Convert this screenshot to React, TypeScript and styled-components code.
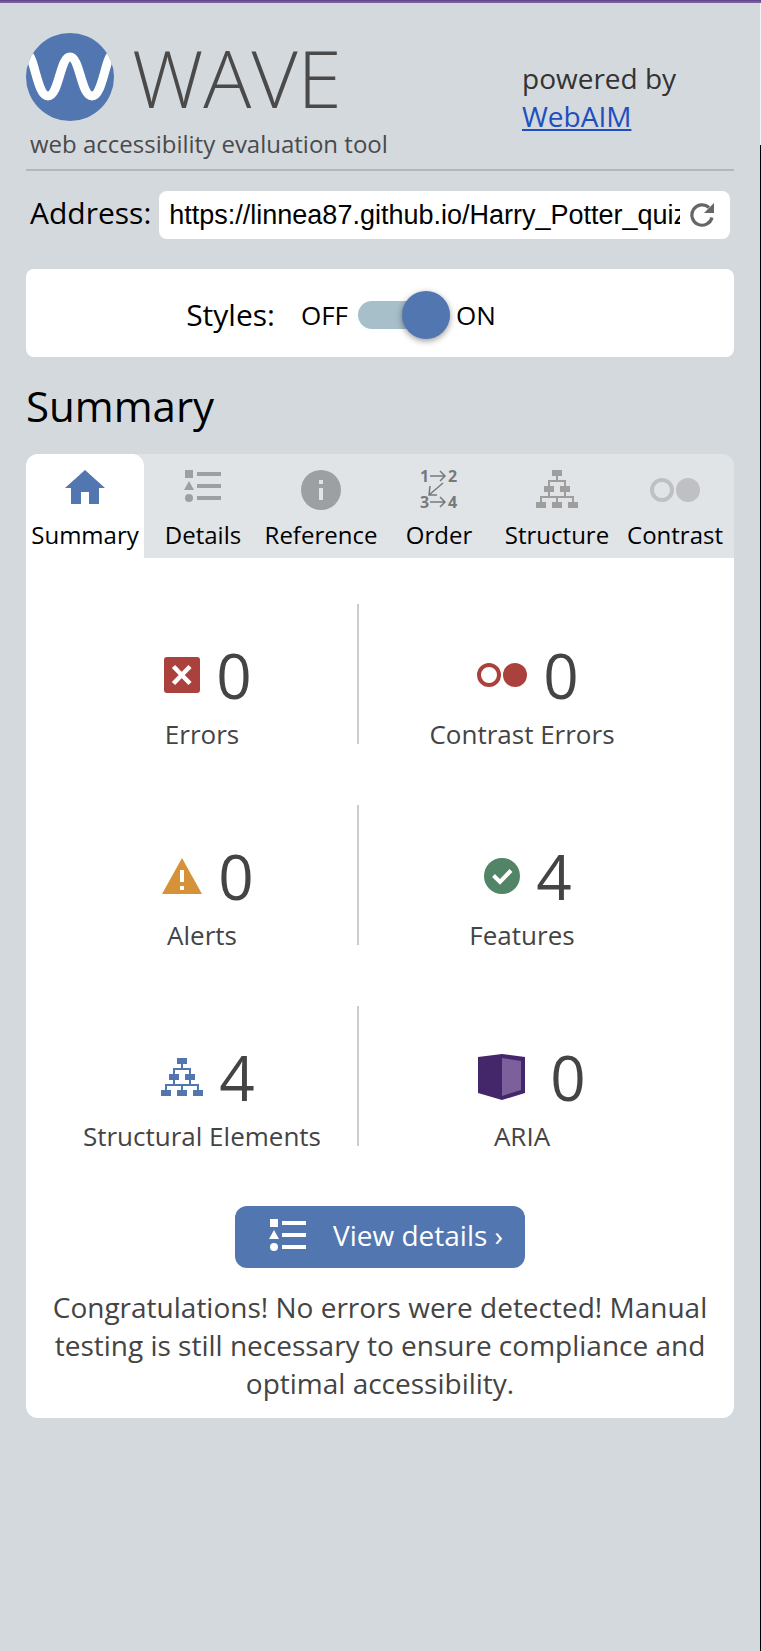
import React, { useState } from "react";
import styled, { createGlobalStyle } from "styled-components";

const colors = {
  page: "#d4d9dd",
  blue: "#5276b0",
  text: "#444444",
  red: "#ab413d",
  icon: "#9ca0a3",
};

const GlobalStyle = createGlobalStyle`
  *, *::before, *::after { box-sizing: border-box; }
  body {
    margin: 0;
    background: ${colors.page};
    color: #000;
    font-family: "Open Sans", "Noto Sans", sans-serif;
    font-size: 28px;
    line-height: 38px;
  }
  button, input { font: inherit; color: inherit; }
`;

const Page = styled.div`
  display: flex;
  flex-direction: column;
  min-height: 100vh;
`;

const TopLine = styled.div`
  height: 3px;
  border-top: 1px solid #5f4885;
  background: #7a5ca0;
`;

const Shell = styled.div`
  display: flex;
  flex: 1;
`;

const Sidebar = styled.div`
  flex: 1;
  min-width: 0;
  padding: 30px 26px 0;
`;

const WindowEdge = styled.div`
  width: 1px;
  background: linear-gradient(#f4f4f4 142px, #000 142px);
`;

const Header = styled.header`
  display: flex;
  justify-content: space-between;
  height: 138px;
  border-bottom: 2px solid #b1b8ba;
`;

const Brand = styled.h1`
  margin: 0;
  font-weight: 300;
`;

const LogoRow = styled.span`
  display: flex;
  align-items: center;
  gap: 18px;
  height: 88px;
  color: #4a4a4a;
  font-size: 80px;
  line-height: 88px;
`;

const Tagline = styled.span`
  display: block;
  padding: 4px 0 0 4px;
  color: #4a4a4a;
  font-size: 24px;
  font-weight: 400;
  line-height: 38px;
`;

const Powered = styled.p`
  width: 212px;
  margin: 0;
  padding-top: 26px;
  color: #333;

  a {
    display: block;
    color: #204fc0;
  }
`;

const AddressRow = styled.form`
  display: flex;
  align-items: flex-start;
  gap: 8px;
  margin-top: 20px;
  padding: 0 4px;
`;

const AddressLabel = styled.label`
  font-size: 30px;
  line-height: 44px;
`;

const AddressField = styled.div`
  display: flex;
  flex: 1;
  align-items: center;
  gap: 10px;
  min-width: 0;
  height: 48px;
  padding: 0 16px 0 10px;
  border-radius: 8px;
  background: #fff;
`;

const AddressInput = styled.input`
  flex: 1;
  min-width: 0;
  height: 48px;
  padding: 0;
  border: 0;
  outline: 0;
  background: none;
  font-family: "Liberation Sans", Arial, sans-serif;
  font-size: 27px;
`;

const IconButton = styled.button`
  display: flex;
  padding: 0;
  border: 0;
  background: none;
`;

const StylesPanel = styled.label`
  display: flex;
  align-items: center;
  justify-content: center;
  height: 88px;
  margin-top: 30px;
  padding: 4px 78px 0 0;
  border-radius: 8px;
  background: #fff;
  font-size: 30px;
`;

const StateText = styled.span`
  font-size: 26px;
`;

const OffText = styled(StateText)`
  margin-left: 26px;
`;

const Switch = styled.input`
  display: flex;
  align-items: center;
  appearance: none;
  width: 92px;
  height: 28px;
  margin: 0 6px 0 10px;
  border-radius: 14px;
  background: #a6bfc9;

  &::before {
    content: "";
    width: 48px;
    height: 48px;
    border-radius: 50%;
    background: ${colors.blue};
    box-shadow: 0 2px 6px rgba(0, 0, 0, 0.4);
  }

  &:checked { justify-content: flex-end; }
`;

const Title = styled.h2`
  margin: 20px 0 19px;
  font-size: 42px;
  font-weight: 400;
  line-height: 58px;
`;

const Tabs = styled.div`
  display: grid;
  grid-template-columns: repeat(6, 1fr);
  border-radius: 12px 12px 0 0;
  background: #e0e4e7;
`;

const Tab = styled.button<{ $active: boolean }>`
  display: flex;
  flex-direction: column;
  align-items: center;
  justify-content: space-between;
  height: 104px;
  padding: 16px 0 6px;
  border: 0;
  border-radius: 12px 12px 0 0;
  background: ${({ $active }) => ($active ? "#fff" : "transparent")};
  font-size: 24px;
  line-height: 34px;
  white-space: nowrap;
`;

const Panel = styled.section`
  padding-bottom: 16px;
  border-radius: 0 0 12px 12px;
  background: #fff;
  color: ${colors.text};
  text-align: center;
`;

const Stats = styled.ul`
  display: grid;
  grid-template-columns: 312fr 326fr;
  row-gap: 61px;
  margin: 0;
  padding: 46px 49px 60px 21px;
  list-style: none;
`;

const Stat = styled.li`
  display: flex;
  flex-direction: column;
  justify-content: flex-end;
  height: 140px;
  font-size: 26px;
  line-height: 20px;

  &:nth-child(odd) { border-right: 2px solid #ccc; }
`;

const StatTop = styled.div`
  display: flex;
  align-items: center;
  justify-content: center;
  gap: 16px;
  height: 48px;
  margin-bottom: 25px;
  padding-left: 12px;
`;

const Count = styled.span`
  font-size: 62px;
  line-height: 48px;
`;

const DetailsButton = styled.button`
  display: inline-flex;
  align-items: center;
  gap: 26px;
  height: 62px;
  padding: 0 22px 4px 34px;
  border: 0;
  border-radius: 12px;
  background: ${colors.blue};
  color: #fff;
`;

const Message = styled.p`
  margin: 20px 20px 0;
`;

const WaveLogo = () => (
  <svg width="88" height="88" viewBox="0 0 88 88" aria-hidden="true">
    <clipPath id="disc"><circle cx="44" cy="44" r="44" /></clipPath>
    <g clipPath="url(#disc)">
      <rect width="88" height="88" fill={colors.blue} />
      <path d="M1 20C9 24 11 63 22 63S34 24 44 24S55 63 66 63S79 24 87 20" fill="none" stroke="#fff" strokeWidth="9" />
    </g>
  </svg>
);

const ReloadIcon = () => (
  <svg width="24" height="24" viewBox="0 0 24 24" aria-hidden="true">
    <path d="M22 14.500A10.200 10.200 0 1 1 19 4.500" fill="none" stroke="#666" strokeWidth="3.200" />
    <path d="M24 0V10H14Z" fill="#666" />
  </svg>
);

const HomeIcon = () => (
  <svg width="40" height="40" viewBox="0 0 40 40" fill={colors.blue} aria-hidden="true">
    <path d="M20 0L40 18H34V34H24V22H16V34H6V18H0Z" />
  </svg>
);

const ListIcon = ({ color = colors.icon, height = 40 }) => (
  <svg width="38" height={height} viewBox={`0 0 38 ${height}`} fill={color} aria-hidden="true">
    <path d="M1 0h8v8H1zM5 11l5 9H0zM13 2h24v4H13zM13 14h24v4H13zM13 26h24v4H13z" />
    <circle cx="5" cy="28" r="4" />
  </svg>
);

const InfoIcon = () => (
  <svg width="40" height="40" viewBox="0 0 40 40" aria-hidden="true">
    <circle cx="20" cy="20" r="20" fill={colors.icon} />
    <path d="M18 10h4v4h-4zM18 18h4v12h-4z" fill="#e0e4e7" />
  </svg>
);

const OrderIcon = () => (
  <svg width="40" height="40" viewBox="0 0 40 40" overflow="visible" fontSize="16" fontWeight="700" fill="#777a7d" aria-hidden="true">
    <text x="1" y="12">1</text>
    <text x="29" y="12">2</text>
    <text x="1" y="38">3</text>
    <text x="29" y="38">4</text>
    <path d="M11 6h15M21 1l5 5l-5 5M11 32h15M21 27l5 5l-5 5M24 13L10 25M11 16l-1 9l8 0" fill="none" stroke="#777a7d" strokeWidth="1.500" />
  </svg>
);

const TreeIcon = ({ color = "#9e9e9e", height = 40 }) => (
  <svg width="42" height={height} viewBox={`0 0 42 ${height}`} fill={color} aria-hidden="true">
    <path d="M16 0h10v6H16zM8 16h10v6H8zM24 16h10v6H24zM0 32h10v6H0zM16 32h10v6H16zM32 32h10v6H32z" />
    <path d="M21 6v5M13 16v-5h16v5M13 22v5M29 22v5M5 32v-5h32v5M21 27v5" fill="none" stroke={color} strokeWidth="2" />
  </svg>
);

const ContrastIcon = ({ color = "#bec0c4" }) => (
  <svg width="50" height="40" viewBox="0 0 50 40" aria-hidden="true">
    <circle cx="12" cy="20" r="10" fill="none" stroke={color} strokeWidth="4" />
    <circle cx="38" cy="20" r="12" fill={color} />
  </svg>
);

const ErrorIcon = () => (
  <svg width="36" height="36" viewBox="0 0 36 36" aria-hidden="true">
    <rect width="36" height="36" rx="3" fill={colors.red} />
    <path d="M9.500 9.500L26 26.500M26 9.500L9.500 26.500" stroke="#fff" strokeWidth="4.500" />
  </svg>
);

const AlertIcon = () => (
  <svg width="40" height="36" viewBox="0 0 40 36" aria-hidden="true">
    <path d="M20 0L40 36H0Z" fill="#d69238" />
    <path d="M18 12h4v12h-4zM18 28h4v4h-4z" fill="#fff" />
  </svg>
);

const FeatureIcon = () => (
  <svg width="36" height="36" viewBox="0 0 36 36" aria-hidden="true">
    <circle cx="18" cy="18" r="18" fill="#528467" />
    <path d="M9.500 17.500L16 24L27 12.500" fill="none" stroke="#fff" strokeWidth="4" />
  </svg>
);

const AriaIcon = () => (
  <svg width="64" height="46" viewBox="-8 0 64 46" aria-hidden="true">
    <path d="M0 3L24 0L47 3V39L24 46L0 39Z" fill="#44276a" />
    <path d="M24 4L43 7V36L24 42Z" fill="#7b609c" />
  </svg>
);

const tabs = [
  { label: "Summary", icon: <HomeIcon /> },
  { label: "Details", icon: <ListIcon /> },
  { label: "Reference", icon: <InfoIcon /> },
  { label: "Order", icon: <OrderIcon /> },
  { label: "Structure", icon: <TreeIcon /> },
  { label: "Contrast", icon: <ContrastIcon /> },
];

const stats = [
  { label: "Errors", count: 0, icon: <ErrorIcon /> },
  { label: "Contrast Errors", count: 0, icon: <ContrastIcon color={colors.red} /> },
  { label: "Alerts", count: 0, icon: <AlertIcon /> },
  { label: "Features", count: 4, icon: <FeatureIcon /> },
  { label: "Structural Elements", count: 4, icon: <TreeIcon color={colors.blue} height={38} /> },
  { label: "ARIA", count: 0, icon: <AriaIcon /> },
];

export default function App() {
  const [active, setActive] = useState("Summary");

  return (
    <Page>
      <GlobalStyle />
      <TopLine />
      <Shell>
        <Sidebar>
          <Header>
            <Brand>
              <LogoRow><WaveLogo />WAVE</LogoRow>
              <Tagline>web accessibility evaluation tool</Tagline>
            </Brand>
            <Powered>powered by <a href="#webaim">WebAIM</a></Powered>
          </Header>
          <AddressRow onSubmit={(e) => e.preventDefault()}>
            <AddressLabel htmlFor="address">Address:</AddressLabel>
            <AddressField>
              <AddressInput id="address" defaultValue="https://linnea87.github.io/Harry_Potter_quiz/" />
              <IconButton type="submit" aria-label="Reload"><ReloadIcon /></IconButton>
            </AddressField>
          </AddressRow>
          <StylesPanel>
            Styles:
            <OffText>OFF</OffText>
            <Switch type="checkbox" role="switch" defaultChecked />
            <StateText>ON</StateText>
          </StylesPanel>
          <Title>Summary</Title>
          <Tabs role="tablist">
            {tabs.map(({ label, icon }) => (
              <Tab key={label} type="button" role="tab" aria-selected={label === active} $active={label === active} onClick={() => setActive(label)}>
                {icon}
                {label}
              </Tab>
            ))}
          </Tabs>
          <Panel>
            <Stats>
              {stats.map(({ label, count, icon }) => (
                <Stat key={label}>
                  <StatTop>{icon}<Count>{count}</Count></StatTop>
                  {label}
                </Stat>
              ))}
            </Stats>
            <DetailsButton type="button">
              <ListIcon color="#fff" height={32} />
              View details ›
            </DetailsButton>
            <Message>
              Congratulations! No errors were detected! Manual testing is still necessary to ensure compliance and
              optimal accessibility.
            </Message>
          </Panel>
        </Sidebar>
        <WindowEdge />
      </Shell>
    </Page>
  );
}
